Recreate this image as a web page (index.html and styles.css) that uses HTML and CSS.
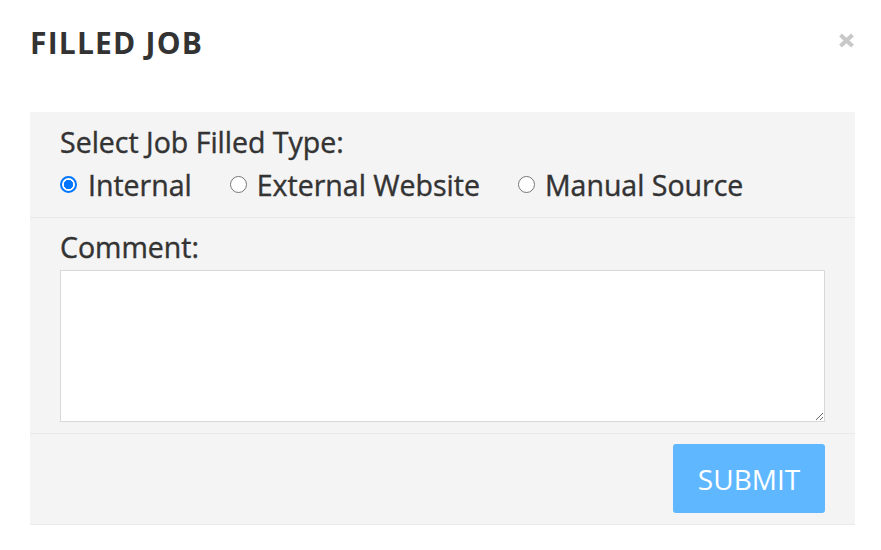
FILE: index.html
```html
<!DOCTYPE html>
<html>
<head>
<meta charset="utf-8">
<link rel="stylesheet" href="styles.css">
</head>
<body>
<div class="modal">
  <div class="modal-header">
    <h1 class="title">FILLED JOB</h1>
    <span class="close"><svg width="17" height="15" viewBox="0 0 17 15"><path d="M2.5 2 L14.5 13 M14.5 2 L2.5 13" stroke="#c8c8c8" stroke-width="4" stroke-linecap="butt"/></svg></span>
  </div>
  <div class="panel">
    <div class="section section-type">
      <div class="label">Select Job Filled Type:</div>
      <div class="radios">
        <label class="radio"><span class="dot checked"></span>Internal</label>
        <label class="radio"><span class="dot"></span>External Website</label>
        <label class="radio"><span class="dot"></span>Manual Source</label>
      </div>
    </div>
    <div class="section section-comment">
      <div class="label">Comment:</div>
      <textarea class="comment"></textarea>
    </div>
    <div class="section section-actions">
      <button class="submit">SUBMIT</button>
    </div>
  </div>
</div>
</body>
</html>
```
FILE: styles.css
```css
html, body {
  margin: 0;
  padding: 0;
  background: #fff;
}
body {
  font-family: "Open Sans", "Liberation Sans", sans-serif;
  color: #333;
}
.modal {
  padding: 0 26px 0 30px;
}
.modal-header {
  display: flex;
  justify-content: space-between;
  align-items: flex-start;
  height: 112px;
}
.title {
  margin: 24px 0 0 0;
  font-size: 30px;
  font-weight: 700;
  letter-spacing: 1.2px;
  line-height: 38px;
  color: #333;
}
.close {
  display: block;
  margin-top: 33px;
  margin-right: 0;
  line-height: 0;
}
.panel {
  background: #f4f4f4;
  border-bottom: 1px solid #ebebeb;
}
.section {
  padding: 0 30px;
  border-bottom: 1px solid #e9e9e9;
}
.section:last-child {
  border-bottom: none;
}
.label,
.radios {
  font-size: 28.5px;
  font-weight: 400;
  -webkit-text-stroke: 0.4px #333;
}
.label {
  line-height: 36px;
}
.section-type {
  padding-top: 12px;
  padding-bottom: 13px;
}
.radios {
  display: flex;
  gap: 38px;
  margin-top: 6px;
  line-height: 38px;
}
.radio {
  display: flex;
  align-items: center;
  gap: 10px;
}
.dot {
  width: 17px;
  height: 17px;
  border: 1px solid #767676;
  border-radius: 50%;
  background: #fff;
  box-sizing: border-box;
  flex: none;
  margin-top: -2px;
}
.dot.checked {
  border: 2px solid #0075ff;
  background: radial-gradient(circle, #0075ff 0 4.4px, #fff 5px);
}
.radio:first-child {
  gap: 11px;
}
.section-comment {
  padding-top: 11px;
  padding-bottom: 11px;
}
.section-comment .label {
  margin-bottom: 5px;
}
.comment {
  display: block;
  width: 100%;
  height: 152px;
  box-sizing: border-box;
  border: 1px solid #d8d8d8;
  background: #fff;
  margin: 0;
  resize: vertical;
}
.section-actions {
  display: flex;
  justify-content: flex-end;
  padding-top: 10px;
  padding-bottom: 11px;
}
.submit {
  width: 152px;
  height: 69px;
  background: #5fb8ff;
  border: none;
  border-radius: 3px;
  color: #fff;
  font-family: "Open Sans", "Liberation Sans", sans-serif;
  font-size: 28px;
  padding: 0;
}
```
